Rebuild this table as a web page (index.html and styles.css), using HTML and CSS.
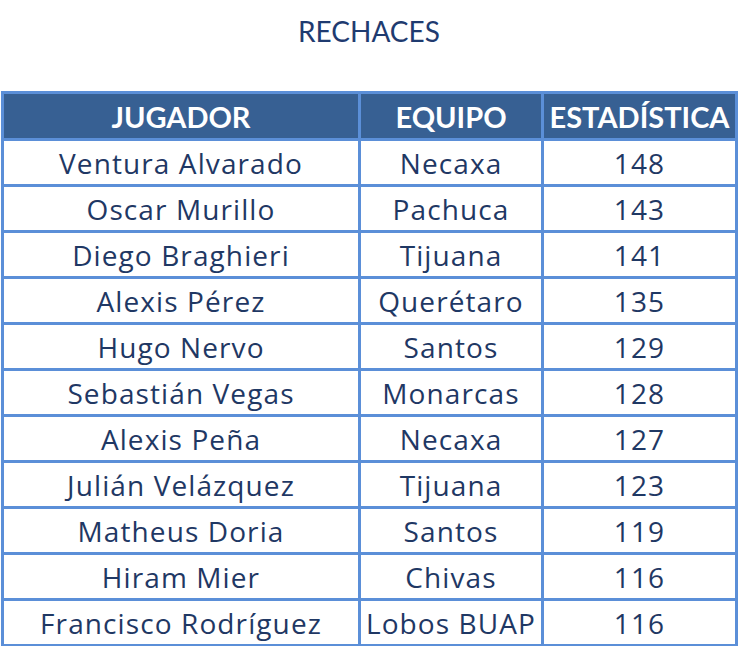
FILE: index.html
```html
<!DOCTYPE html>
<html lang="es">
<head>
<meta charset="utf-8">
<link rel="stylesheet" href="styles.css">
</head>
<body>
<h1 class="title">RECHACES</h1>
<table class="stats">
  <colgroup>
    <col class="c-player"><col class="c-team"><col class="c-stat">
  </colgroup>
  <thead>
    <tr><th>JUGADOR</th><th>EQUIPO</th><th>ESTADÍSTICA</th></tr>
  </thead>
  <tbody>
    <tr><td>Ventura Alvarado</td><td>Necaxa</td><td>148</td></tr>
    <tr><td>Oscar Murillo</td><td>Pachuca</td><td>143</td></tr>
    <tr><td>Diego Braghieri</td><td>Tijuana</td><td>141</td></tr>
    <tr><td>Alexis Pérez</td><td>Querétaro</td><td>135</td></tr>
    <tr><td>Hugo Nervo</td><td>Santos</td><td>129</td></tr>
    <tr><td>Sebastián Vegas</td><td>Monarcas</td><td>128</td></tr>
    <tr><td>Alexis Peña</td><td>Necaxa</td><td>127</td></tr>
    <tr><td>Julián Velázquez</td><td>Tijuana</td><td>123</td></tr>
    <tr><td>Matheus Doria</td><td>Santos</td><td>119</td></tr>
    <tr><td>Hiram Mier</td><td>Chivas</td><td>116</td></tr>
    <tr><td>Francisco Rodríguez</td><td>Lobos BUAP</td><td>116</td></tr>
  </tbody>
</table>
</body>
</html>
```
FILE: styles.css
```css
html, body {
  margin: 0;
  padding: 0;
  background: #ffffff;
}
body {
  font-family: "Lato", "Open Sans", sans-serif;
  color: #1f3864;
  width: 738px;
  height: 646px;
  overflow: hidden;
}
.title {
  margin: 0;
  padding-top: 14px;
  height: 76px;
  box-sizing: border-box;
  text-align: center;
  font-size: 28px;
  font-weight: 400;
  line-height: 34px;
  color: #1f3b70;
}
.stats {
  margin-left: 1px;
  border-collapse: collapse;
  table-layout: fixed;
  width: 734px;
  margin-top: 15px;
}
.c-player { width: 357px; }
.c-team { width: 183px; }
.c-stat { width: 194px; }
.stats th, .stats td {
  border: 3px solid #5b8fd8;
  text-align: center;
  padding: 0;
  white-space: nowrap;
}
.stats th {
  background: #376093;
  color: #ffffff;
  font-weight: 700;
  font-size: 29px;
  height: 44px;
}
.stats td {
  font-family: "Open Sans", "Lato", sans-serif;
  font-size: 28px;
  letter-spacing: 1.1px;
  height: 43px;
  color: #1f3864;
}
```
